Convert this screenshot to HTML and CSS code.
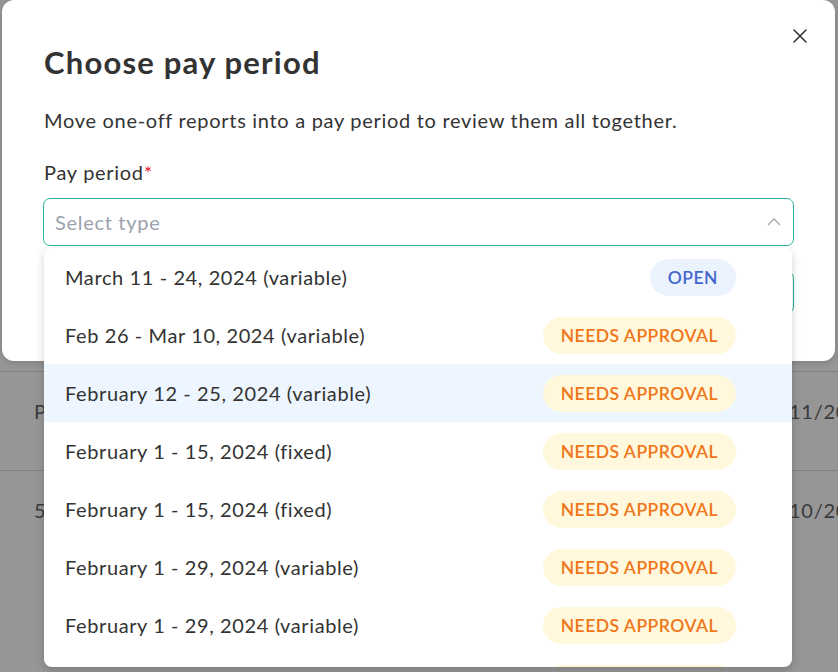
FILE: index.html
```html
<!DOCTYPE html>
<html lang="en">
<head>
<meta charset="utf-8">
<title>Choose pay period</title>
<link rel="stylesheet" href="styles.css">
</head>
<body>
<div class="page">
  <div class="page-row"><span class="cell-left">P</span><span class="cell-right">11/20</span></div>
  <div class="page-row"><span class="cell-left">5</span><span class="cell-right">10/20</span></div>
</div>

<div class="modal" role="dialog" aria-labelledby="modal-title">
  <button class="close" aria-label="Close">
    <svg width="14" height="14" viewBox="0 0 14 14"><path d="M1 1L13 13M13 1L1 13" stroke="#333" stroke-width="1.6" stroke-linecap="round" fill="none"/></svg>
  </button>
  <h1 id="modal-title" class="title">Choose pay period</h1>
  <p class="desc">Move one-off reports into a pay period to review them all together.</p>
  <label class="label">Pay period<span class="req">*</span></label>
  <div class="select-wrap">
    <div class="select">
      <span class="placeholder">Select type</span>
      <svg class="chev" width="14" height="9" viewBox="0 0 14 9"><path d="M1 8L7 2L13 8" stroke="#a9a9a9" stroke-width="1.4" fill="none"/></svg>
    </div>
    <ul class="menu">
      <li class="opt"><span>March 11 - 24, 2024 (variable)</span><span class="badge open">OPEN</span></li>
      <li class="opt"><span>Feb 26 - Mar 10, 2024 (variable)</span><span class="badge needs">NEEDS APPROVAL</span></li>
      <li class="opt hl"><span>February 12 - 25, 2024 (variable)</span><span class="badge needs">NEEDS APPROVAL</span></li>
      <li class="opt"><span>February 1 - 15, 2024 (fixed)</span><span class="badge needs">NEEDS APPROVAL</span></li>
      <li class="opt"><span>February 1 - 15, 2024 (fixed)</span><span class="badge needs">NEEDS APPROVAL</span></li>
      <li class="opt"><span>February 1 - 29, 2024 (variable)</span><span class="badge needs">NEEDS APPROVAL</span></li>
      <li class="opt"><span>February 1 - 29, 2024 (variable)</span><span class="badge needs">NEEDS APPROVAL</span></li>
      <li class="opt"><span>January 15 - 28, 2024 (variable)</span><span class="badge needs">NEEDS APPROVAL</span></li>
    </ul>
  </div>
  <div class="footer">
    <button class="btn">Move</button>
  </div>
</div>
</body>
</html>
```

FILE: styles.css
```css
* { box-sizing: border-box; }
html, body { margin: 0; padding: 0; }
body {
  width: 838px;
  height: 672px;
  overflow: hidden;
  background: #969696;
  font-family: Lato, "Noto Sans", sans-serif;
  color: #333;
  position: relative;
}
.page {
  padding-top: 371px;
}
.page-row {
  height: 99px;
  border-top: 1px solid #808080;
  display: flex;
  justify-content: space-between;
  align-items: flex-start;
  padding: 27px 0 0 34px;
  font-size: 20px;
  line-height: 24px;
  letter-spacing: 0.7px;
  color: #3a3a3a;
  white-space: nowrap;
}
.cell-right { margin-right: -10px; }
.modal {
  position: absolute;
  left: 2px;
  top: 0;
  width: 833px;
  height: 361px;
  background: #fff;
  border-radius: 12px;
  box-shadow: 0 2px 6px rgba(0,0,0,0.15);
  padding: 44px 42px 0 42px;
}
.close {
  position: absolute;
  right: 27px;
  top: 28px;
  width: 16px;
  height: 16px;
  padding: 1px;
  border: 0;
  background: none;
  display: flex;
}
.title {
  margin: 0;
  font-size: 31px;
  line-height: 36px;
  font-weight: 700;
  color: #333;
  letter-spacing: 1.2px;
}
.desc {
  margin: 27px 0 0;
  font-size: 20px;
  line-height: 26px;
  letter-spacing: 0.7px;
  color: #333;
}
.label {
  display: block;
  margin-top: 26px;
  font-size: 20px;
  line-height: 26px;
  letter-spacing: 0.7px;
}
.req { color: #e0242f; }
.select-wrap {
  position: relative;
  margin-top: 13px;
  width: 751px;
  margin-left: -1px;
}
.select {
  height: 48px;
  border: 1px solid #2bb59a;
  border-radius: 7px;
  display: flex;
  align-items: center;
  justify-content: space-between;
  padding: 0 12px 0 11px;
}
.placeholder {
  font-size: 20px;
  letter-spacing: 0.7px;
  color: #9ba1ad;
}
.chev { margin-top: -2px; }
.menu {
  position: absolute;
  left: 1px;
  top: 50px;
  width: 748px;
  height: 419px;
  margin: 0;
  padding: 0;
  list-style: none;
  background: #fff;
  border-radius: 8px;
  box-shadow: 0 3px 10px rgba(0,0,0,0.18);
  overflow: hidden;
  z-index: 2;
}
.opt {
  height: 58px;
  display: flex;
  align-items: center;
  justify-content: space-between;
  padding: 0 56px 0 21px;
  font-size: 20px;
  letter-spacing: 0.6px;
  color: #333;
}
.opt.hl { background: #edf5fe; }
.badge {
  height: 37px;
  border-radius: 19px;
  display: flex;
  align-items: center;
  padding: 0 18px;
  font-size: 17.5px;
  font-weight: 600;
  letter-spacing: 0.5px;
}
.badge.open { background: #eaf3fe; color: #4766cd; }
.badge.needs { background: #fff8dc; color: #f0761a; }
.footer {
  display: flex;
  justify-content: flex-end;
  margin-top: 25px;
  width: 750px;
}
.btn {
  height: 43px;
  width: 120px;
  border: 1px solid #2bb59a;
  border-radius: 7px;
  background: #fff;
  font-family: inherit;
  font-size: 18px;
}
```
